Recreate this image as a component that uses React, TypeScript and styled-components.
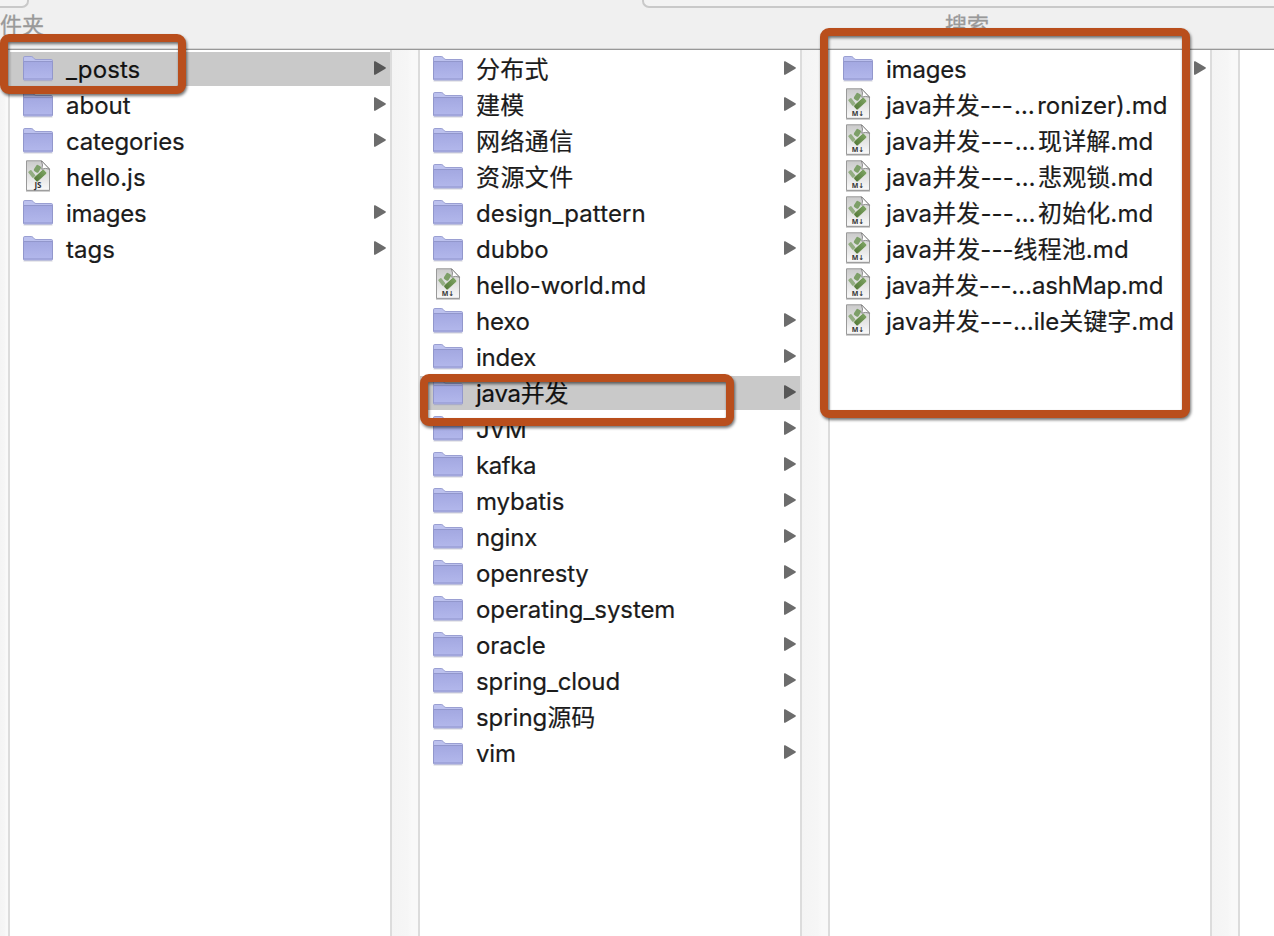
import React from "react";
import styled, { createGlobalStyle } from "styled-components";

const Global = createGlobalStyle`
  * { box-sizing: border-box; }
  body { margin: 0; background: #fff; overflow: hidden; }
`;

const Window = styled.main`
  position: relative;
  width: 1274px;
  height: 936px;
  display: flex;
  flex-direction: column;
  overflow: hidden;
  background: #fff;
  color: #1b1b1b;
  font-family: Inter, "Noto Sans CJK SC", sans-serif;
  font-size: 24px;
`;

const Toolbar = styled.header`
  flex: none;
  height: 50px;
  background: #f0f0f0;
  border-bottom: 1px solid #989898;
  box-shadow: inset 0 -1px 0 #d5d5d5;
`;

const ControlRow = styled.div`
  display: flex;
  justify-content: space-between;
  height: 8px;
`;

const Control = styled.div<{ $width: number; $side: "left" | "right" }>`
  width: ${(p) => p.$width}px;
  height: 8px;
  background: #f3f3f3;
  border: solid #c9c9c9;
  border-width: ${(p) => (p.$side === "left" ? "0 2px 2px 0" : "0 0 2px 2px")};
  border-radius: ${(p) => (p.$side === "left" ? "0 0 7px 0" : "0 0 0 7px")};
`;

const LabelRow = styled.div`
  display: flex;
  color: #999;
  font-size: 22px;
  line-height: 34px;
  -webkit-text-stroke: 0.3px currentColor;
`;

const ToolbarLabel = styled.span<{ $indent?: number }>`
  margin-left: ${(p) => p.$indent ?? 0}px;
`;

const Browser = styled.div`
  flex: 1;
  display: flex;
`;

const Gutter = styled.div<{ $width: number }>`
  flex: none;
  width: ${(p) => p.$width}px;
  background: linear-gradient(90deg, #f4f4f4, #f6f6f6 60%, #f9f9f9 75%, #f9f9f9);
  border: solid #dcdcdc;
  border-width: ${(p) => (p.$width < 20 ? "0 2px 0 0" : "0 2px")};
`;

const Column = styled.ul`
  flex: none;
  width: 380px;
  margin: 0;
  padding: 1px 0 0;
  list-style: none;
`;

const Row = styled.li<{ $selected?: boolean }>`
  display: flex;
  align-items: center;
  height: 34px;
  margin: 1px 0 2px;
  padding: 0 4px 0 12px;
  background: ${(p) => (p.$selected ? "#c9c9c9" : "transparent")};
  color: ${(p) => (p.$selected ? "#111" : "#1b1b1b")};
`;

const IconSlot = styled.span<{ $raised?: boolean }>`
  display: flex;
  justify-content: center;
  width: 32px;
  margin-right: 12px;
  padding-bottom: ${(p) => (p.$raised ? 2 : 0)}px;
`;

const Name = styled.span<{ $tracking?: number }>`
  flex: 1;
  padding-top: 1px;
  line-height: 33px;
  white-space: nowrap;
  letter-spacing: ${(p) => p.$tracking ?? 0}px;
  -webkit-text-stroke: 0.2px currentColor;
`;

const WideEllipsis = styled.span`
  padding-left: 1px;
  letter-spacing: 2.5px;
`;

const Callout = styled.div<{ $x: number; $y: number; $w: number; $h: number }>`
  position: absolute;
  left: ${(p) => p.$x}px;
  top: ${(p) => p.$y}px;
  width: ${(p) => p.$w}px;
  height: ${(p) => p.$h}px;
  border: 8px solid #b94e1c;
  border-radius: 9px;
  filter: drop-shadow(1px 2px 1.5px rgba(0, 0, 0, 0.55));
`;

const FolderIcon = () => (
  <svg width="32" height="28" viewBox="0 0 32 28">
    <defs>
      <linearGradient id="folder" x1="0" y1="0" x2="0" y2="1">
        <stop offset="0" stopColor="#a3a8e1" />
        <stop offset="1" stopColor="#b3b8ec" />
      </linearGradient>
    </defs>
    <path d="M1.5 26H30.5" stroke="#b5b5c0" strokeWidth="1" opacity=".6" />
    <path d="M1.5 8V2.8Q1.5 1.5 2.8 1.5H9.2Q10.3 1.5 11 2.3L12.3 3.8Q12.9 4.5 14 4.5H29.3Q30.5 4.5 30.5 5.7V8Z" fill="#bcc1ee" stroke="#9a9fd2" />
    <path d="M1.5 6.5H30.5V24.2Q30.5 25 29.7 25H2.3Q1.5 25 1.5 24.2Z" fill="url(#folder)" stroke="#9297cc" />
    <path d="M2 23.5H30" stroke="#a0a5db" />
  </svg>
);

const DocumentIcon = ({ tag }: { tag: string }) => (
  <svg width="26" height="32" viewBox="0 0 26 32">
    <defs>
      <linearGradient id="paper" x1="0" y1="0" x2="0" y2="1">
        <stop offset="0" stopColor="#cbcbcb" />
        <stop offset="0.55" stopColor="#e4e4e4" />
        <stop offset="1" stopColor="#fafafa" />
      </linearGradient>
      <linearGradient id="leaf" x1="0" y1="0" x2="0" y2="1">
        <stop offset="0" stopColor="#7da363" />
        <stop offset="1" stopColor="#557a39" />
      </linearGradient>
    </defs>
    <path d="M1.5 .8H16.5L24.5 9V30.3H1.5Z" fill="url(#paper)" stroke="#999" />
    <path d="M1 31H25" stroke="#888" strokeWidth=".8" />
    <rect x="-2.7" y="-3.6" width="5.4" height="7.2" rx="1.6" transform="translate(12.4 8.8) rotate(32)" fill="#7d9f68" />
    <rect x="-2" y="-4" width="4" height="8" rx="1" transform="translate(6.9 14) rotate(-38)" fill="#93ad82" />
    <rect x="-2.9" y="-6.8" width="5.8" height="13.6" rx="1.2" transform="translate(15.2 15.6) rotate(48)" fill="url(#leaf)" stroke="#e4e8e0" strokeWidth=".6" />
    <path d="M16.5 .8Q18.3 5 16.8 9.2Q20.5 7.6 24.5 9.2Z" fill="#fff" stroke="#707070" strokeWidth=".8" />
    <text
      x="13"
      y="28.4"
      textAnchor="middle"
      fontSize={tag === "JS" ? 8 : 7}
      fontWeight="700"
      fontFamily="Open Sans, DejaVu Sans, sans-serif"
      fill="#333"
    >
      {tag}
    </text>
  </svg>
);

const Arrow = ({ dark }: { dark?: boolean }) => (
  <svg width="12" height="14" viewBox="0 0 12 14">
    <path d="M0 1Q0 -.2 1.2 .3L11.4 6.3Q12.3 7 11.4 7.7L1.2 13.7Q0 14.2 0 13Z" fill={dark ? "#575757" : "#6c6c6c"} />
  </svg>
);

const ArrowSlot = styled.span`
  display: flex;
  padding-bottom: 2px;
`;

type Entry = { name: string; kind?: "JS" | "M↓"; tracking?: number; selected?: boolean; wide?: boolean };

const siteEntries: Entry[] = [
  { name: "_posts", selected: true, tracking: 0.1 },
  { name: "about" },
  { name: "categories", tracking: -0.15 },
  { name: "hello.js", kind: "JS" },
  { name: "images", tracking: -0.2 },
  { name: "tags" },
];

const postEntries: Entry[] = [
  { name: "分布式", tracking: 0.3 },
  { name: "建模", tracking: 0.3 },
  { name: "网络通信", tracking: 0.4 },
  { name: "资源文件", tracking: 0.4 },
  { name: "design_pattern", tracking: 0.07 },
  { name: "dubbo" },
  { name: "hello-world.md", kind: "M↓", tracking: -0.1 },
  { name: "hexo", tracking: -0.2 },
  { name: "index", tracking: -0.2 },
  { name: "java并发", selected: true, tracking: -0.25 },
  { name: "JVM", tracking: -0.6 },
  { name: "kafka", tracking: -0.45 },
  { name: "mybatis", tracking: -0.1 },
  { name: "nginx", tracking: -0.15 },
  { name: "openresty", tracking: -0.2 },
  { name: "operating_system", tracking: -0.08 },
  { name: "oracle", tracking: -0.15 },
  { name: "spring_cloud", tracking: -0.1 },
  { name: "spring源码", tracking: -0.05 },
  { name: "vim", tracking: -0.2 },
];

const javaEntries: Entry[] = [
  { name: "images", tracking: -0.2 },
  { name: "java并发---…ronizer).md", kind: "M↓", wide: true },
  { name: "java并发---…现详解.md", kind: "M↓", wide: true, tracking: 0.1 },
  { name: "java并发---…悲观锁.md", kind: "M↓", wide: true, tracking: 0.1 },
  { name: "java并发---…初始化.md", kind: "M↓", wide: true, tracking: 0.1 },
  { name: "java并发---线程池.md", kind: "M↓", tracking: 0.08 },
  { name: "java并发---…ashMap.md", kind: "M↓", tracking: -0.17 },
  { name: "java并发---…ile关键字.md", kind: "M↓" },
];

const EntryName = ({ entry }: { entry: Entry }) => {
  if (!entry.wide) return <Name $tracking={entry.tracking}>{entry.name}</Name>;
  const [head, tail] = entry.name.split("…");
  return (
    <Name $tracking={entry.tracking}>
      {head}
      <WideEllipsis>…</WideEllipsis>
      {tail}
    </Name>
  );
};

const FileColumn = ({ entries }: { entries: Entry[] }) => (
  <Column>
    {entries.map((e) => (
      <Row key={e.name} $selected={e.selected}>
        <IconSlot $raised={!!e.kind}>{e.kind ? <DocumentIcon tag={e.kind} /> : <FolderIcon />}</IconSlot>
        <EntryName entry={e} />
        {!e.kind && (
          <ArrowSlot>
            <Arrow dark={e.selected} />
          </ArrowSlot>
        )}
      </Row>
    ))}
  </Column>
);

export default function App() {
  return (
    <Window>
      <Global />
      <Toolbar>
        <ControlRow>
          <Control $width={29} $side="left" />
          <Control $width={632} $side="right" />
        </ControlRow>
        <LabelRow>
          <ToolbarLabel>件夹</ToolbarLabel>
          <ToolbarLabel $indent={901}>搜索</ToolbarLabel>
        </LabelRow>
      </Toolbar>
      <Browser>
        <Gutter $width={10} />
        <FileColumn entries={siteEntries} />
        <Gutter $width={30} />
        <FileColumn entries={postEntries} />
        <Gutter $width={30} />
        <FileColumn entries={javaEntries} />
        <Gutter $width={30} />
      </Browser>
      <Callout $x={0} $y={34} $w={186} $h={60} />
      <Callout $x={420} $y={374} $w={314} $h={52} />
      <Callout $x={820} $y={28} $w={370} $h={390} />
    </Window>
  );
}
